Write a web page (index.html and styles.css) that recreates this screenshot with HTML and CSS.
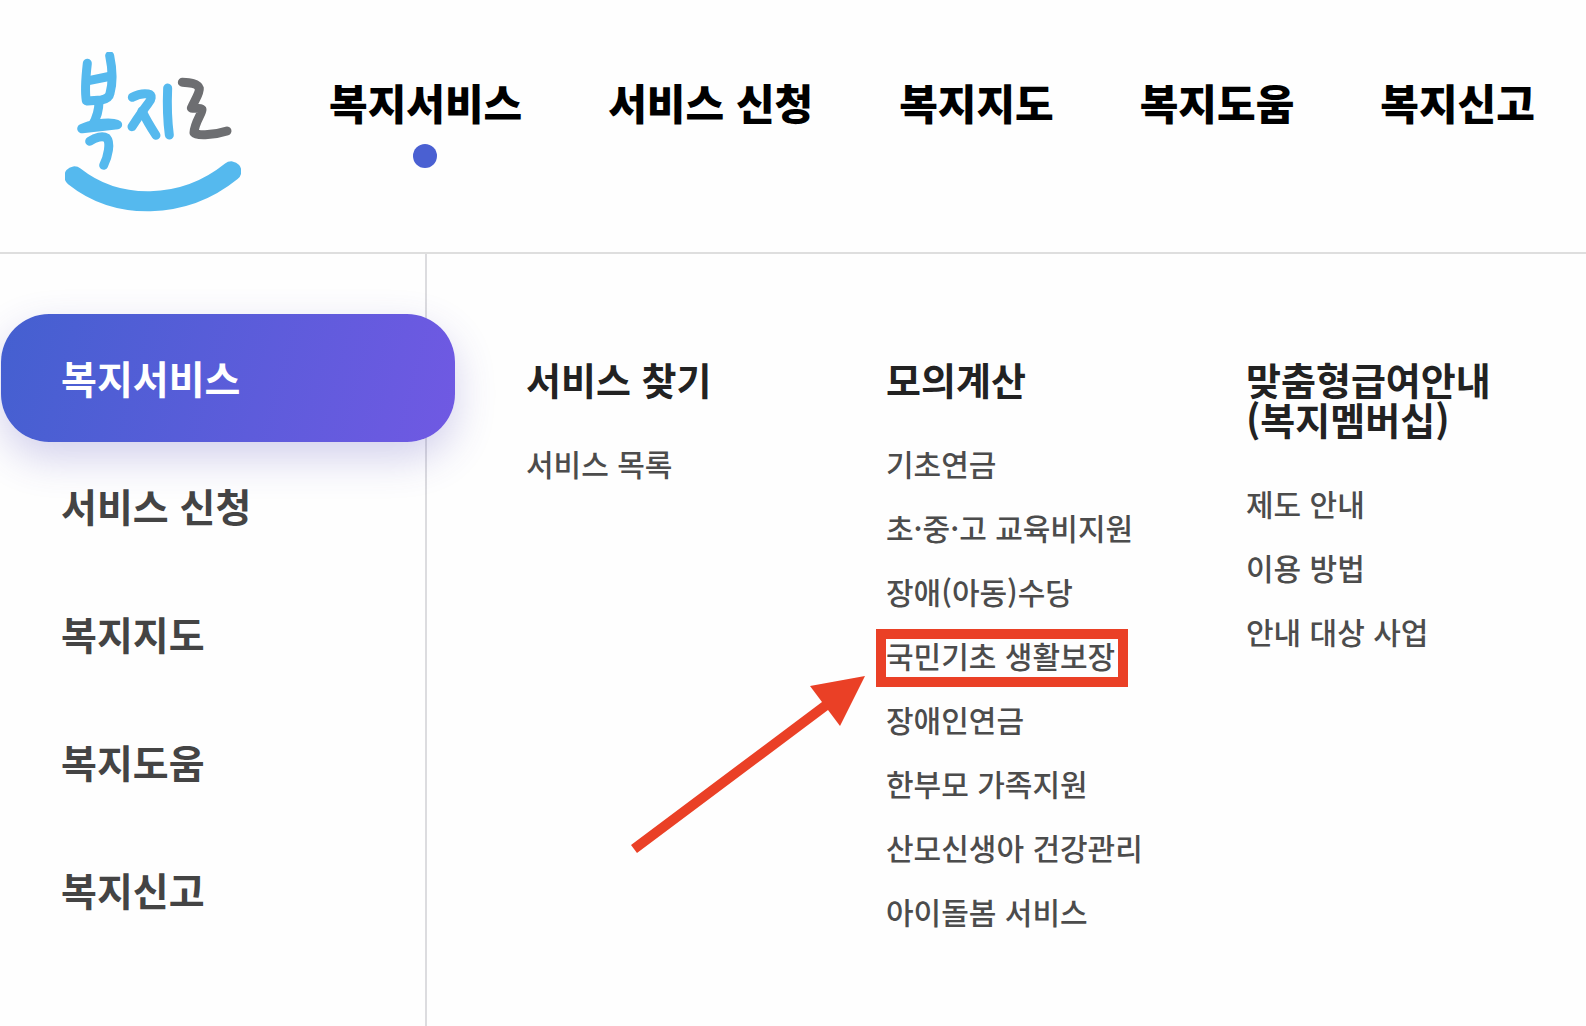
FILE: index.html
```html
<!DOCTYPE html>
<html lang="ko">
<head>
<meta charset="utf-8">
<meta name="viewport" content="width=device-width, initial-scale=1">
<title>복지로</title>
<link rel="stylesheet" href="styles.css">
</head>
<body>
<header class="header">
  <a class="logo" href="#" aria-label="복지로">
    <svg class="logo-mark" viewBox="45 36 528 480" fill="none" stroke-linecap="round" stroke-linejoin="round" aria-hidden="true">
      <g stroke="#55b9ee" stroke-width="27">
        <path d="M112 70C108 105 103 148 109 182"/>
        <path d="M179 47C186 80 191 120 180 160C178 171 168 177 154 180L112 183"/>
        <path d="M116 122L184 108"/>
        <path d="M147 184C147 208 140 234 127 256"/>
        <path d="M95 266C120 254 164 246 191 250C197 251 201 252 203 254L97 266"/>
        <path d="M119 304C137 292 158 286 170 294C183 308 174 350 161 376"/>
        <path d="M247 172C262 164 282 160 294 162C309 165 304 180 295 190C282 207 266 230 246 260"/>
        <path d="M276 213C290 242 303 263 318 286"/>
        <path d="M353 144C351 190 352 240 358 285"/>
      </g>
      <path d="M397 127C420 128 443 130 448 145C450 158 435 180 424 204C434 206 450 203 456 208C457 220 434 246 432 278C440 290 500 283 531 273" stroke="#6d6e71" stroke-width="27"/>
      <path d="M73 409C200 510 398 512 544 394" stroke="#55b9ee" stroke-width="60"/>
    </svg>
  </a>
  <nav class="main-nav" aria-label="주 메뉴">
    <a class="main-link is-active" href="#">복지서비스</a>
    <a class="main-link" href="#">서비스 신청</a>
    <a class="main-link" href="#">복지지도</a>
    <a class="main-link" href="#">복지도움</a>
    <a class="main-link" href="#">복지신고</a>
  </nav>
</header>
<main class="mega">
  <nav class="side" aria-label="메뉴 분류">
    <a class="side-link is-active" href="#">복지서비스</a>
    <a class="side-link" href="#">서비스 신청</a>
    <a class="side-link" href="#">복지지도</a>
    <a class="side-link" href="#">복지도움</a>
    <a class="side-link" href="#">복지신고</a>
  </nav>
  <div class="columns">
    <section class="column">
      <h2 class="column-title">서비스 찾기</h2>
      <ul class="column-list">
        <li><a class="item" href="#">서비스 목록</a></li>
      </ul>
    </section>
    <section class="column">
      <h2 class="column-title">모의계산</h2>
      <ul class="column-list">
        <li><a class="item" href="#">기초연금</a></li>
        <li><a class="item" href="#">초·중·고 교육비지원</a></li>
        <li><a class="item" href="#">장애(아동)수당</a></li>
        <li><a class="item is-marked" href="#">국민기초 생활보장<svg class="arrow" viewBox="0 0 234 178" aria-hidden="true"><path d="M234 0L179 10L191 26L0 169L6 177L197 34L209 50Z" fill="#ea4026"/></svg></a></li>
        <li><a class="item" href="#">장애인연금</a></li>
        <li><a class="item" href="#">한부모 가족지원</a></li>
        <li><a class="item" href="#">산모신생아 건강관리</a></li>
        <li><a class="item" href="#">아이돌봄 서비스</a></li>
      </ul>
    </section>
    <section class="column">
      <h2 class="column-title">맞춤형급여안내<br>(복지멤버십)</h2>
      <ul class="column-list">
        <li><a class="item" href="#">제도 안내</a></li>
        <li><a class="item" href="#">이용 방법</a></li>
        <li><a class="item" href="#">안내 대상 사업</a></li>
      </ul>
    </section>
  </div>
</main>
</body>
</html>
```
FILE: styles.css
```css
* { box-sizing: border-box; }

body {
  display: flex;
  flex-direction: column;
  min-height: 100vh;
  margin: 0;
  background: #fefefe;
  color: #4c4c4c;
  font-family: "Noto Sans CJK KR", sans-serif;
}

a { color: inherit; text-decoration: none; white-space: nowrap; }

.header {
  display: flex;
  align-items: flex-start;
  gap: 88px;
  padding: 52px 48px 40px 65px;
  border-bottom: 2px solid #dedede;
}

.logo { flex: none; }
.logo-mark { display: block; width: 176px; height: 160px; }

.main-nav { display: flex; gap: 86px; padding-top: 18px; }

.main-link {
  position: relative;
  color: #000;
  font-size: 42px;
  font-weight: 900;
  line-height: 64px;
}

.main-link.is-active::after {
  content: "";
  position: absolute;
  top: 74px;
  left: calc(50% - 13px);
  width: 24px;
  height: 24px;
  border-radius: 50%;
  background: #4a60d2;
}

.mega { display: flex; flex: 1; }

.side {
  flex: none;
  width: 427px;
  padding-top: 60px;
  border-right: 2px solid #dcdcdf;
}

.side-link {
  display: block;
  margin-left: 1px;
  padding: 0 0 2px 60px;
  color: #444;
  font-size: 39px;
  font-weight: 700;
  line-height: 126px;
}

.side-link.is-active {
  position: relative;
  margin-right: -30px;
  border-radius: 48px;
  background: linear-gradient(105deg, #4460d0, #7059e3);
  box-shadow: 0 16px 40px rgba(70, 64, 180, 0.24);
  color: #fff;
}

.columns {
  display: grid;
  flex: 1;
  grid-template-columns: repeat(3, 1fr);
  gap: 20px;
  padding: 105px 0 64px 99px;
}

.column-title {
  margin: 0 0 32px;
  color: #222;
  font-size: 38px;
  font-weight: 700;
  line-height: 40px;
}

.column-list { margin: 0; padding: 0; list-style: none; }

.item {
  display: inline-block;
  position: relative;
  font-size: 30px;
  font-weight: 500;
  line-height: 64px;
  vertical-align: top;
}

.is-marked::after {
  content: "";
  position: absolute;
  inset: 6px -13px 0 -10px;
  border: 10px solid #ea4026;
}

.arrow {
  position: absolute;
  top: 53px;
  left: -255px;
  width: 234px;
  height: 178px;
}
```
